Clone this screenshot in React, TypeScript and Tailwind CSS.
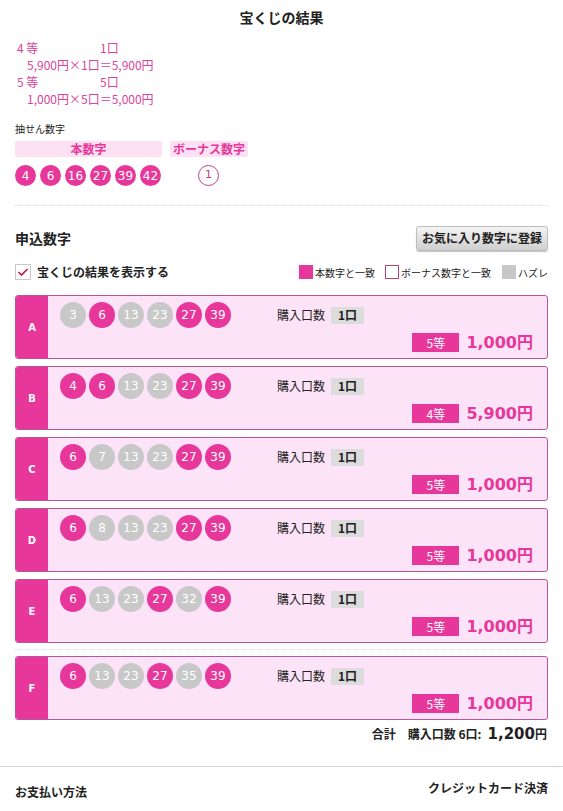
import React from "react";

const PINK = "bg-[#e8379a]";

type Ball = { n: number; hit: boolean };
type Row = { label: string; balls: Ball[]; rank: string; price: string };

const rows: Row[] = [
  { label: "A", balls: [{ n: 3, hit: false }, { n: 6, hit: true }, { n: 13, hit: false }, { n: 23, hit: false }, { n: 27, hit: true }, { n: 39, hit: true }], rank: "5等", price: "1,000円" },
  { label: "B", balls: [{ n: 4, hit: true }, { n: 6, hit: true }, { n: 13, hit: false }, { n: 23, hit: false }, { n: 27, hit: true }, { n: 39, hit: true }], rank: "4等", price: "5,900円" },
  { label: "C", balls: [{ n: 6, hit: true }, { n: 7, hit: false }, { n: 13, hit: false }, { n: 23, hit: false }, { n: 27, hit: true }, { n: 39, hit: true }], rank: "5等", price: "1,000円" },
  { label: "D", balls: [{ n: 6, hit: true }, { n: 8, hit: false }, { n: 13, hit: false }, { n: 23, hit: false }, { n: 27, hit: true }, { n: 39, hit: true }], rank: "5等", price: "1,000円" },
  { label: "E", balls: [{ n: 6, hit: true }, { n: 13, hit: false }, { n: 23, hit: false }, { n: 27, hit: true }, { n: 32, hit: false }, { n: 39, hit: true }], rank: "5等", price: "1,000円" },
  { label: "F", balls: [{ n: 6, hit: true }, { n: 13, hit: false }, { n: 23, hit: false }, { n: 27, hit: true }, { n: 35, hit: false }, { n: 39, hit: true }], rank: "5等", price: "1,000円" },
];

const numFont = "font-['DejaVu_Sans','Noto_Sans_CJK_JP',sans-serif]";

function Card({ row }: { row: Row }) {
  return (
    <div className="flex h-[64px] rounded-[3px] border border-[#b8569a] bg-[#fde3f7] overflow-hidden">
      <div className={`w-[32px] ${PINK} flex items-center justify-center text-white text-[10px] font-bold ${numFont}`}>
        {row.label}
      </div>
      <div className="flex-1 flex flex-col pl-[12px] pr-[14px]">
        <div className="flex items-center mt-[6px] h-[26px]">
          <div className="flex gap-[3px] w-[217px]">
            {row.balls.map((b, i) => (
              <div
                key={i}
                className={`w-[26px] h-[26px] rounded-full flex items-center justify-center text-white text-[12px] ${numFont} ${b.hit ? PINK : "bg-[#c8c8c8]"}`}
              >
                {b.n}
              </div>
            ))}
          </div>
          <span className="text-[12px] text-[#222]">購入口数</span>
          <span className="ml-[6px] bg-[#dcdcdc] h-[17px] px-[7px] flex items-center text-[12px] font-bold text-[#222]">1口</span>
        </div>
        <div className="flex justify-end items-center mt-[4px] h-[21px]">
          <span className={`${PINK} text-white text-[12px] w-[47px] h-[19px] flex items-center justify-center`}>{row.rank}</span>
          <span className={`ml-[7px] text-[#e8379a] text-[16px] font-bold ${numFont}`}>{row.price}</span>
        </div>
      </div>
    </div>
  );
}

export default function App() {
  return (
    <div className="w-[563px] bg-white text-[#222] font-['Noto_Sans_CJK_JP',sans-serif]">
      <div className="px-[15px]">
        <div className="h-[34px] flex items-center justify-center text-[14px] font-bold pt-[1px]">宝くじの結果</div>
        <div className="mt-[5px] text-[12px] leading-[17px] text-[#d9449b] pl-[2px]">
          <div className="flex"><span className="w-[83px]">4 等</span><span>1口</span></div>
          <div className="pl-[10px]">5,900円×1口＝5,900円</div>
          <div className="flex"><span className="w-[83px]">5 等</span><span>5口</span></div>
          <div className="pl-[10px]">1,000円×5口＝5,000円</div>
        </div>
        <div className="mt-[15px] text-[10px] leading-[14px]">抽せん数字</div>
        <div className="mt-[5px] flex gap-[8px]">
          <div className="w-[147px] h-[16px] bg-[#fde0f4] rounded-[2px] flex items-center justify-center text-[12px] font-bold text-[#e8379a]">本数字</div>
          <div className="w-[78px] h-[16px] bg-[#fde0f4] rounded-[2px] flex items-center justify-center text-[12px] font-bold text-[#e8379a]">ボーナス数字</div>
        </div>
        <div className="mt-[8px] flex items-center">
          <div className="flex gap-[4px] w-[183px]">
            {[4, 6, 16, 27, 39, 42].map((n) => (
              <div key={n} className={`w-[21px] h-[21px] rounded-full ${PINK} text-white text-[12px] flex items-center justify-center ${numFont}`}>{n}</div>
            ))}
          </div>
          <div className={`w-[21px] h-[21px] rounded-full border border-[#c0407f] text-[#c0407f] text-[11px] flex items-center justify-center ${numFont}`}>1</div>
        </div>
        <div className="mt-[19px] border-t border-dotted border-[#d8d8d8]" />
        <div className="mt-[20px] flex items-center justify-between h-[24px]">
          <div className="text-[14px] font-bold">申込数字</div>
          <button className="w-[132px] h-[25px] rounded-[3px] border border-[#bdbdbd] bg-gradient-to-b from-[#f4f4f4] to-[#cfcfcf] shadow-[0_1px_1px_rgba(0,0,0,0.25)] text-[12px] font-bold text-[#222]">
            お気に入り数字に登録
          </button>
        </div>
        <div className="mt-[14px] flex items-center h-[16px]">
          <div className="w-[16px] h-[16px] border border-[#c8c8c8] bg-white flex items-center justify-center">
            <svg width="12" height="10" viewBox="0 0 12 10"><path d="M1.5 5 L4.5 8 L10.5 2" stroke="#c2163f" strokeWidth="1.6" fill="none" /></svg>
          </div>
          <span className="ml-[6px] text-[12px] font-bold">宝くじの結果を表示する</span>
          <div className="ml-auto flex items-center text-[10px]">
            <span className={`w-[14px] h-[14px] ${PINK}`} />
            <span className="ml-[2px]">本数字と一致</span>
            <span className="ml-[10px] w-[14px] h-[14px] border border-[#c0407f] bg-white" />
            <span className="ml-[2px]">ボーナス数字と一致</span>
            <span className="ml-[11px] w-[14px] h-[14px] bg-[#c8c8c8]" />
            <span className="ml-[2px]">ハズレ</span>
          </div>
        </div>
        <div className="mt-[15px] flex flex-col gap-[7px]">
          {rows.slice(0, 5).map((r) => (
            <Card key={r.label} row={r} />
          ))}
        </div>
        <div className="mt-[6px] border-t border-dotted border-[#e0e0e0]" />
        <div className="mt-[6px]">
          <Card row={rows[5]} />
        </div>
        <div className="mt-[3px] flex justify-end items-baseline text-[12px] font-bold pr-[1px]">
          <span>合計</span>
          <span className="ml-[12px]">購入口数 6口:</span>
          <span className={`ml-[6px] text-[15px] ${numFont}`}>1,200</span>
          <span className="text-[12px]">円</span>
        </div>
      </div>
      <div className="mt-[20px] border-t border-[#d0d0d0]" />
      <div className="px-[15px] mt-[16px] flex justify-between text-[12px] font-bold pb-[12px]">
        <span>お支払い方法</span>
        <span className="-mt-[4px]">クレジットカード決済</span>
      </div>
    </div>
  );
}
